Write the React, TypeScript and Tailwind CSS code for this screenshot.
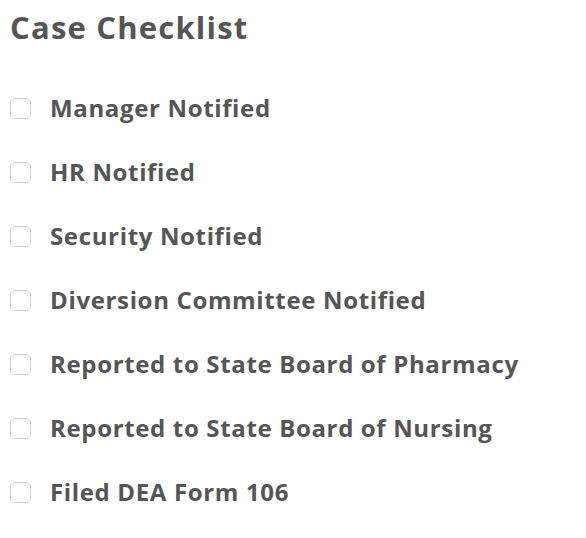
import React from "react";

const items = [
  "Manager Notified",
  "HR Notified",
  "Security Notified",
  "Diversion Committee Notified",
  "Reported to State Board of Pharmacy",
  "Reported to State Board of Nursing",
  "Filed DEA Form 106",
];

export default function App() {
  return (
    <div className="w-[586px] h-[538px] bg-white text-[#555555] font-['Open_Sans',sans-serif] pl-[10px] pt-[7px]">
      <h1 className="text-[31px] font-bold leading-[40px] tracking-[1.2px]">Case Checklist</h1>
      <div className="mt-[49px] flex flex-col gap-[40px]">
        {items.map((t) => (
          <label key={t} className="flex items-center h-[24px]">
            <span className="w-[21px] h-[21px] rounded-[5px] border border-[#d2d2d2] bg-white shrink-0 shadow-[inset_0_1px_1px_rgba(0,0,0,0.04)]" />
            <span className="ml-[19px] text-[24px] font-bold leading-[24px] tracking-[0.65px]">{t}</span>
          </label>
        ))}
      </div>
    </div>
  );
}
